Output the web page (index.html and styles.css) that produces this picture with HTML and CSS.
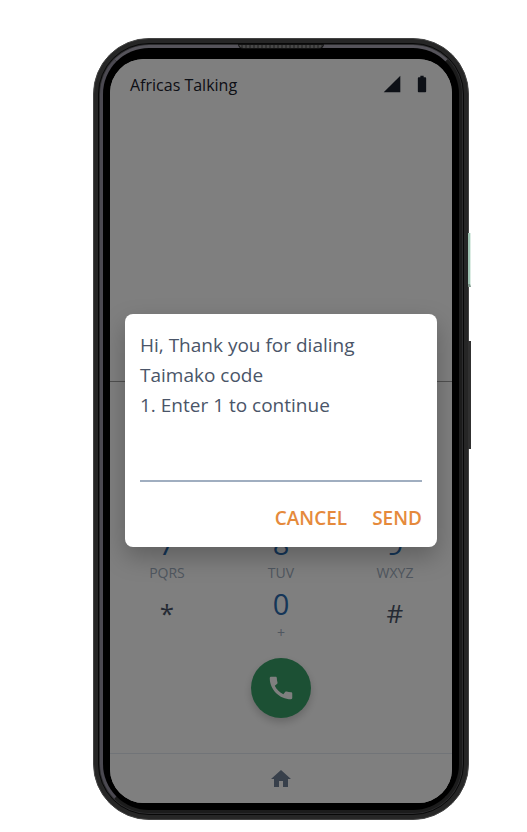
FILE: index.html
```html
<!DOCTYPE html>
<html lang="en">
<head>
  <meta charset="utf-8">
  <meta name="viewport" content="width=device-width, initial-scale=1">
  <title>Africas Talking</title>
  <link rel="stylesheet" href="styles.css">
</head>
<body>
  <main class="stage">
    <div class="phone">
      <span class="side-key power"></span>
      <span class="side-key volume"></span>
      <div class="rim">
        <span class="speaker"></span>
        <div class="bezel">
          <div class="screen">
            <header class="status">
              <span class="carrier">Africas Talking</span>
              <span class="status-icons">
                <svg width="20" height="20" viewBox="0 0 24 24" aria-hidden="true"><path d="M2 22h20V2z"/></svg>
                <svg width="20" height="20" viewBox="0 0 24 24" aria-hidden="true"><path d="M15.67 4H14V2h-4v2H8.33C7.6 4 7 4.6 7 5.33v15.33C7 21.4 7.6 22 8.33 22h7.33c.74 0 1.34-.6 1.34-1.33V5.33C17 4.6 16.4 4 15.67 4z"/></svg>
              </span>
            </header>
            <section class="dialer">
              <div class="keypad">
                <button class="key" type="button">7<small>PQRS</small></button>
                <button class="key" type="button">8<small>TUV</small></button>
                <button class="key" type="button">9<small>WXYZ</small></button>
                <button class="key symbol" type="button">*</button>
                <button class="key" type="button">0<small>+</small></button>
                <button class="key symbol" type="button">#</button>
              </div>
              <button class="call" type="button" aria-label="Call">
                <svg width="30" height="30" viewBox="0 0 24 24" aria-hidden="true"><path d="M20.01 15.38c-1.23 0-2.42-.2-3.53-.56-.35-.12-.74-.03-1.01.24l-1.57 1.97c-2.83-1.35-5.48-3.9-6.89-6.83l1.95-1.66c.27-.28.35-.67.24-1.02-.37-1.11-.56-2.3-.56-3.53 0-.54-.45-.99-.99-.99H4.19C3.65 3 3 3.24 3 3.99 3 13.28 10.73 21 20.01 21c.71 0 .99-.63.99-1.18v-3.45c0-.54-.45-.99-.99-.99z"/></svg>
              </button>
            </section>
            <nav class="nav">
              <a class="home" href="#" aria-label="Home">
                <svg width="24" height="24" viewBox="0 0 24 24" aria-hidden="true"><path d="M10 20v-6h4v6h5v-8h3L12 3 2 12h3v8z"/></svg>
              </a>
            </nav>
            <div class="overlay">
              <form class="dialog" role="dialog" aria-labelledby="message">
                <label class="message" id="message" for="reply">Hi, Thank you for dialing Taimako code<br>1. Enter 1 to continue</label>
                <input class="reply" id="reply" type="text" autocomplete="off">
                <div class="actions">
                  <button class="action" type="button">CANCEL</button>
                  <button class="action" type="button">SEND</button>
                </div>
              </form>
            </div>
          </div>
        </div>
      </div>
    </div>
  </main>
</body>
</html>
```

FILE: styles.css
```css
*,
*::before,
*::after {
  box-sizing: border-box;
}

body {
  margin: 0;
  background: #fff;
  color: #4a5568;
  font-family: "Segoe UI", "Open Sans", "Noto Sans", sans-serif;
}

button {
  margin: 0;
  padding: 0;
  border: 0;
  background: none;
  font: inherit;
  cursor: pointer;
}

svg {
  display: block;
  fill: currentColor;
}

.stage {
  padding: 38px 58px 12px 93px;
}

/* Device shell */
.phone {
  position: relative;
  max-width: 376px;
  padding: 4px;
  border: 1px solid #444;
  border-radius: 56px;
  background: #262626;
}

.rim {
  position: relative;
  padding: 1px;
  border: 1px solid #080808;
  border-radius: 51px;
  background: #2c2c2e;
}

.bezel {
  padding: 11px 7px 7px;
  border: 3px solid #1c1c1c;
  border-top-color: #55535a;
  border-left-color: #4b4951;
  border-radius: 49px;
  background: #000;
}

.speaker {
  position: absolute;
  top: 0;
  left: 50%;
  width: 86px;
  height: 5px;
  margin-left: -43px;
  border: 1px solid #111;
  border-radius: 0 0 5px 5px;
  background: repeating-linear-gradient(90deg, #484848 0 2px, #333 2px 4px);
}

.side-key {
  position: absolute;
  left: 100%;
  width: 3px;
}

.power {
  top: 194px;
  height: 54px;
  border-right: 1px solid #dcece4;
  border-bottom: 3px solid #7f958a;
  background: #9fc4b3;
}

.volume {
  top: 302px;
  height: 108px;
  background: #303030;
}

/* Screen */
.screen {
  position: relative;
  display: flex;
  flex-direction: column;
  min-height: 744px;
  border-radius: 34px;
  background: #fff;
  overflow: hidden;
}

.status {
  display: flex;
  justify-content: space-between;
  flex: 1;
  padding: 12px 20px;
  color: #1a202c;
  font-size: 16px;
  line-height: 28px;
}

.status-icons {
  display: flex;
  gap: 10px;
  padding-top: 3px;
}

.dialer {
  padding: 148px 0 35px;
  border-top: 1px solid #a0a0a0;
  text-align: center;
}

.keypad {
  display: grid;
  grid-template-columns: repeat(3, 1fr);
  margin-bottom: 8px;
}

.key {
  height: 60px;
  color: #2b6cb0;
  font-size: 29px;
  line-height: 26px;
}

.key small {
  display: block;
  color: #a0aec0;
  font-size: 14px;
  line-height: 32px;
}

.key.symbol {
  padding-bottom: 14px;
  color: #4a5568;
  font-size: 26px;
}

.call {
  display: inline-grid;
  place-items: center;
  width: 60px;
  height: 60px;
  border-radius: 50%;
  background: #38a169;
  color: #fff;
  box-shadow: 0 4px 8px rgba(0, 0, 0, 0.2);
  vertical-align: top;
}

.nav {
  display: flex;
  align-items: center;
  justify-content: center;
  height: 50px;
  border-top: 1px solid #e2e8f0;
}

.home {
  color: #718096;
}

/* Dialog */
.overlay {
  position: absolute;
  inset: 0;
  display: flex;
  align-items: center;
  padding: 0 15px 2px;
  background: rgba(0, 0, 0, 0.5);
}

.dialog {
  width: 100%;
  padding: 16px 15px 14px;
  border-radius: 8px;
  background: #fff;
  box-shadow: 0 10px 25px rgba(0, 0, 0, 0.25);
  font-size: 19px;
}

.message {
  display: block;
  line-height: 30px;
}

.reply {
  display: block;
  width: 100%;
  height: 62px;
  padding: 20px 0 0;
  border: 0;
  border-bottom: 2px solid #a0aec0;
  outline: 0;
  background: none;
  color: inherit;
  font: inherit;
}

.actions {
  display: flex;
  justify-content: flex-end;
  gap: 25px;
  padding-top: 21px;
}

.action {
  color: #e58a3c;
  font-weight: 600;
  line-height: 30px;
}
```
